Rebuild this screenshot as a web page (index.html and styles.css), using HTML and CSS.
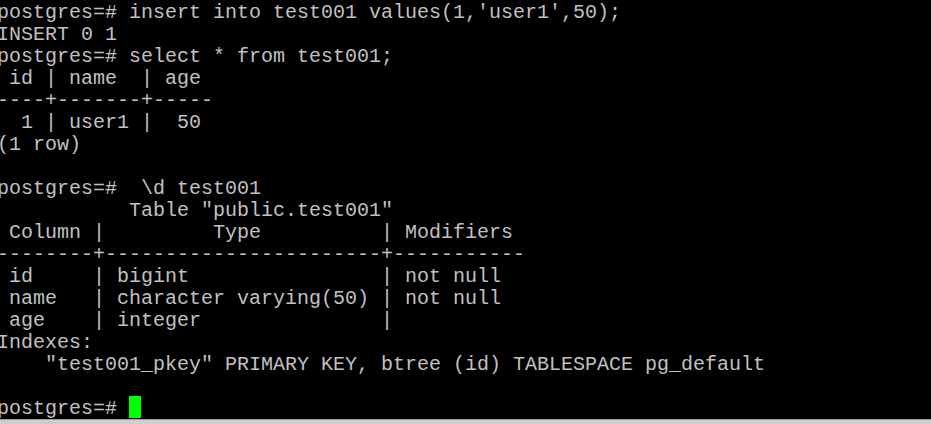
FILE: index.html
```html
<!DOCTYPE html>
<html>
<head>
<meta charset="utf-8">
<link rel="stylesheet" href="styles.css">
</head>
<body>
<div class="term">
<pre class="screen">postgres=# insert into test001 values(1,'user1',50);
INSERT 0 1
postgres=# select * from test001;
 id | name  | age
----+-------+-----
  1 | user1 |  50
(1 row)

postgres=#  \d test001
           Table "public.test001"
 Column |         Type          | Modifiers
--------+-----------------------+-----------
 id     | bigint                | not null
 name   | character varying(50) | not null
 age    | integer               |
Indexes:
    "test001_pkey" PRIMARY KEY, btree (id) TABLESPACE pg_default

postgres=# <span class="cursor"> </span></pre>
</div>
<div class="statusbar"></div>
</body>
</html>
```

FILE: styles.css
```css
html, body {
  margin: 0;
  padding: 0;
  height: 100%;
  background: #000;
  overflow: hidden;
}
body {
  display: flex;
  flex-direction: column;
}
.term {
  height: 419px;
  flex: none;
  background: #000;
  overflow: hidden;
}
.screen {
  margin: 0 0 0 -3px;
  padding-top: 2px;
  font-family: "Liberation Mono", "Courier New", monospace;
  font-size: 20px;
  line-height: 22px;
  color: #c0c0c0;
  white-space: pre;
}
.cursor {
  display: inline-block;
  width: 12px;
  height: 22px;
  margin-top: -2px;
  vertical-align: top;
  background: #00ff00;
}
.statusbar {
  flex: 1;
  background: #cdcdcd;
  border-top: 1px solid #a0a0a0;
}
```
